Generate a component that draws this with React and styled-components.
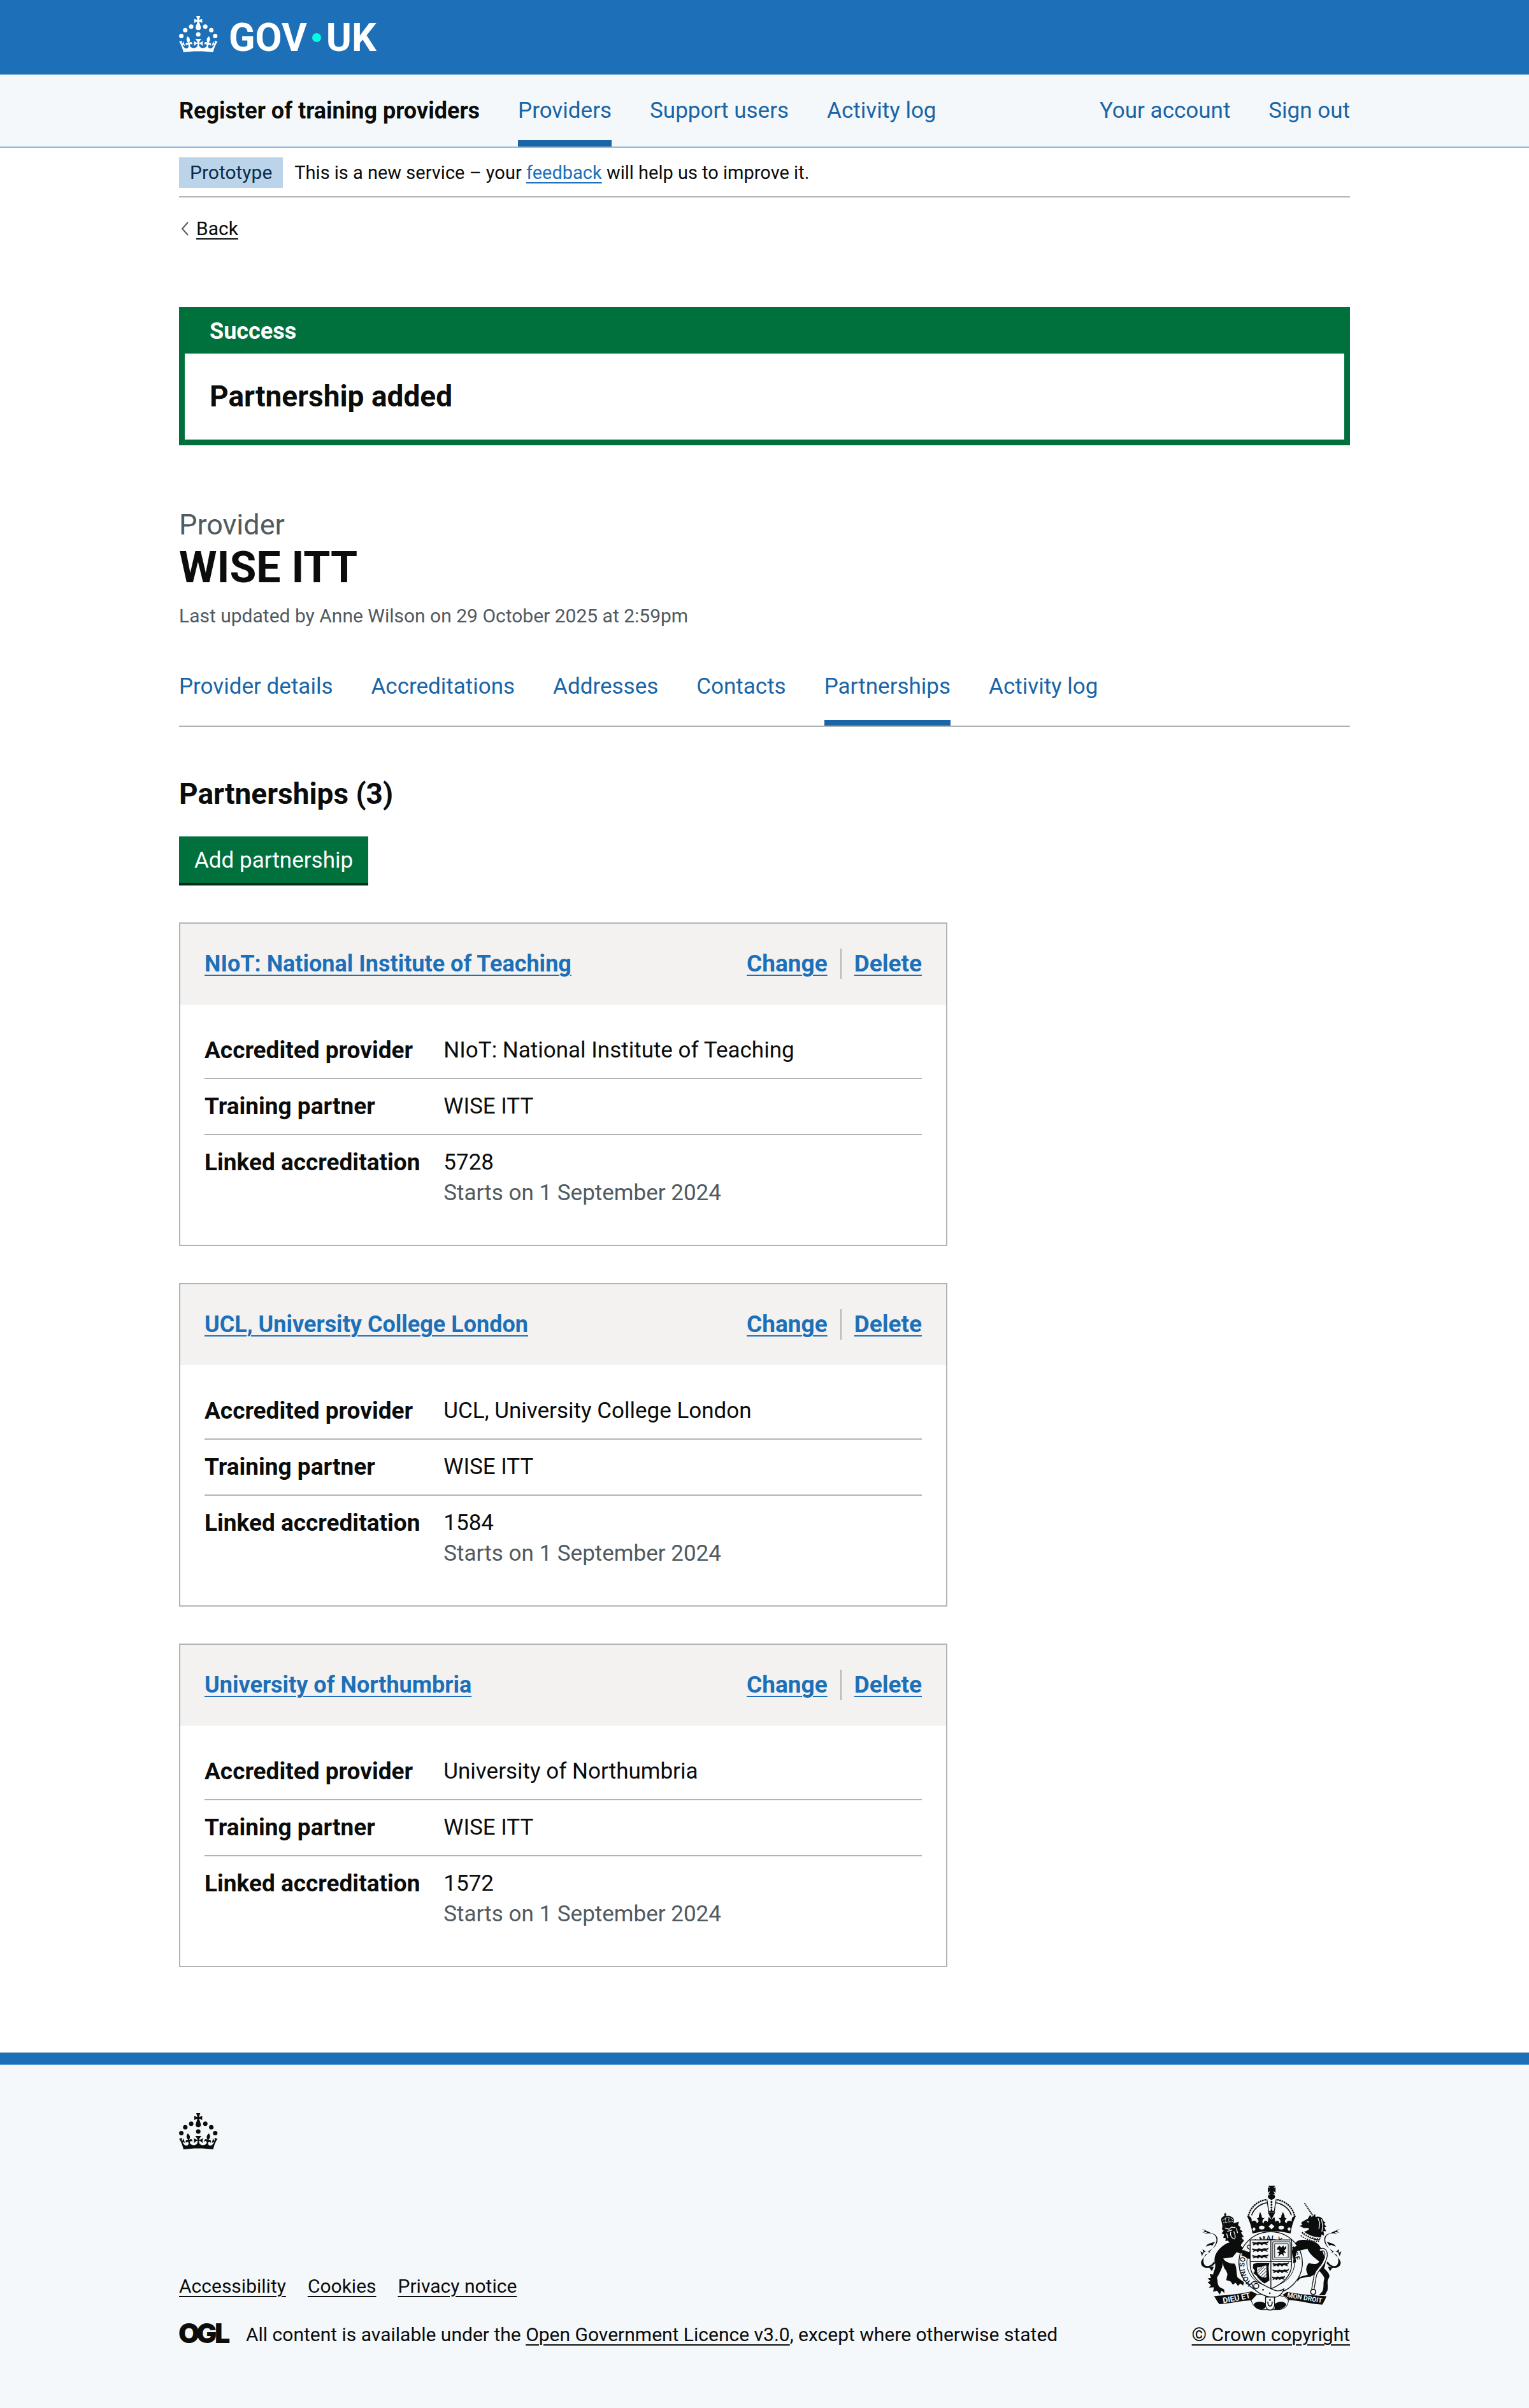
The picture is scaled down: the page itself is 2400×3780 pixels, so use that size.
import React from "react";
import styled, { createGlobalStyle, css } from "styled-components";

const color = {
  text: "#0b0c0c",
  secondary: "#505a5f",
  brand: "#1d70b8",
  link: "#1a65a6",
  brandTint: "#f4f8fb",
  tag: "#bbd4ea",
  tagText: "#0c2d4a",
  border: "#b1b4b6",
  navBorder: "#8eb8dc",
  green: "#00703c",
  greenDark: "#002d18",
  cardHeader: "#f3f2f1",
};

const GlobalStyle = createGlobalStyle`
  *, *::before, *::after { box-sizing: border-box; }
  body {
    margin: 0;
    background: ${color.brandTint};
    color: ${color.text};
    font-family: Roboto, "Liberation Sans", Arial, sans-serif;
    font-size: 35px;
    line-height: 48px;
  }
  h1, h2, p, ul, dl, dd { margin: 0; padding: 0; }
  ul { list-style: none; }
`;

const Container = styled.div`
  max-width: 1898px;
  margin: 0 auto;
  padding: 0 30px;
`;

const Page = styled.div`
  background: #fff;
`;

const small = css`
  font-size: 30px;
  line-height: 38px;
`;

const underline = css`
  text-decoration: underline;
  text-decoration-thickness: 2px;
  text-underline-offset: 5px;
`;

const TextLink = styled.a`
  ${underline}
  color: ${(p) => (p.$inverse ? color.text : color.brand)};
`;

/* Header */

const Header = styled.header`
  background: ${color.brand};
  padding: 25px 0 35px;
`;

const HomeLink = styled.a`
  display: inline-flex;
  align-items: center;
  color: #fff;
  text-decoration: none;
  height: 57px;
  vertical-align: top;
`;

const CrownSvg = styled.svg`
  display: block;
  width: 61px;
  height: 57px;
`;

const Wordmark = styled.span`
  display: inline-flex;
  align-items: center;
  gap: 8px;
  margin-left: 17px;
  padding-top: 10px;
  font-size: 61px;
  line-height: 60px;
  font-weight: 700;
`;

const Dot = styled.span`
  width: 14px;
  height: 14px;
  border-radius: 50%;
  background: #00ffe0;
`;

const ServiceBar = styled.div`
  background: ${color.brandTint};
  border-bottom: 2px solid ${color.navBorder};
`;

const ServiceRow = styled.div`
  display: flex;
  gap: 60px;
`;

const ServiceName = styled.a`
  padding-top: 33px;
  font-size: 36px;
  font-weight: 700;
  color: ${color.text};
  text-decoration: none;
`;

const NavList = styled.ul`
  display: flex;
  flex-grow: ${(p) => (p.$grow ? 1 : 0)};
  gap: 60px;
  border-bottom: ${(p) => (p.$ruled ? `2px solid ${color.border}` : "0")};
`;

const NavItem = styled.li`
  margin-left: ${(p) => (p.$pushed ? "auto" : "0")};
`;

const NavLink = styled.a`
  display: block;
  padding: 33px 0 22px;
  color: ${color.link};
  text-decoration: none;
  border-bottom: 10px solid ${(p) => (p.$active ? color.link : "transparent")};
`;

const TabLink = styled(NavLink)`
  padding: 0 0 28px;
  border-bottom-width: 9px;
`;

/* Page top */

const PhaseBanner = styled.div`
  ${small}
  display: flex;
  align-items: center;
  gap: 18px;
  padding: 15px 0 13px;
  border-bottom: 2px solid ${color.border};
`;

const PhaseTag = styled.strong`
  padding: 5px 17px;
  background: ${color.tag};
  color: ${color.tagText};
  font-weight: 400;
`;

const PhaseText = styled.span`
  font-size: 29px;
`;

const BackLink = styled.a`
  ${small}
  display: inline-flex;
  align-items: center;
  gap: 12px;
  margin-top: 30px;
  padding-left: 3px;
  color: ${color.text};
  text-decoration: none;
  vertical-align: top;
`;

const BackText = styled.span`
  ${underline}
`;

const Main = styled.main`
  padding: 104px 0 134px;
`;

const Banner = styled.section`
  border: 9px solid ${color.green};
`;

const BannerHeading = styled.h2`
  padding: 5px 39px 11px;
  background: ${color.green};
  color: #fff;
  font-size: 36px;
  line-height: 48px;
`;

const BannerText = styled.p`
  padding: 38px 39px 39px;
  font-size: 46px;
  line-height: 58px;
  font-weight: 700;
`;

const Title = styled.h1`
  margin-top: 96px;
  font-size: 68px;
  line-height: 76px;
`;

const Caption = styled.span`
  display: block;
  color: ${color.secondary};
  font-size: 45px;
  line-height: 58px;
  font-weight: 400;
`;

const Updated = styled.p`
  ${small}
  margin: 19px 0 68px;
  color: ${color.secondary};
`;

const SectionHeading = styled.h2`
  margin: 76px 0 38px;
  font-size: 46px;
  line-height: 58px;
`;

const Button = styled.button`
  display: block;
  margin-bottom: 62px;
  padding: 14px 24px 11px;
  border: 0;
  background: ${color.green};
  box-shadow: 0 4px 0 ${color.greenDark};
  color: #fff;
  font: inherit;
`;

/* Cards */

const CardList = styled.div`
  display: grid;
  gap: 58px;
  width: 66%;
  max-width: 1206px;
`;

const Card = styled.section`
  border: 2px solid ${color.border};
`;

const CardHeader = styled.div`
  display: flex;
  justify-content: space-between;
  padding: 39px 38px 40px;
  background: ${color.cardHeader};
  font-weight: 700;
`;

const CardTitle = styled.h2`
  font-size: 36px;
  line-height: 48px;
`;

const Actions = styled.ul`
  display: flex;
  font-size: 37px;
`;

const Action = styled.li`
  & + & {
    margin-left: 20px;
    padding-left: 20px;
    border-left: 2px solid ${color.border};
  }
`;

const Summary = styled.dl`
  padding: 29px 38px 57px;
`;

const SummaryRow = styled.div`
  display: grid;
  grid-template-columns: 1fr 2fr;
  padding: 19px 0;
  border-bottom: 2px solid ${color.border};

  &:last-child {
    padding-bottom: 0;
    border-bottom: 0;
  }
`;

const Term = styled.dt`
  font-size: 37px;
  font-weight: 700;
`;

const Hint = styled.span`
  display: block;
  color: ${color.secondary};
`;

/* Footer */

const Footer = styled.footer`
  ${small}
  padding: 76px 0 96px;
  background: ${color.brandTint};
  border-top: 19px solid ${color.brand};
`;

const FooterRow = styled.div`
  display: flex;
  align-items: flex-end;
  justify-content: space-between;
  margin-top: 57px;
`;

const FooterLinks = styled.ul`
  display: flex;
  gap: 34px;
  margin-bottom: 38px;
`;

const Licence = styled.div`
  display: flex;
  align-items: center;
  gap: 17px;
`;

const OglSvg = styled.svg`
  flex: none;
  width: 88px;
  height: 52px;
  margin: -10px 0 -4px;
`;

const Copyright = styled.a`
  ${underline}
  display: flex;
  flex-direction: column;
  align-items: center;
  gap: 19px;
  color: ${color.text};
`;

const ArmsSvg = styled.svg`
  display: block;
  width: 223px;
  height: 196px;
`;

function Crown() {
  return (
    <CrownSvg viewBox="0 0 64 60" fill="currentColor" aria-hidden="true">
      <circle cx="20" cy="17.6" r="3.7" />
      <circle cx="10.2" cy="23.5" r="3.7" />
      <circle cx="3.7" cy="33.2" r="3.7" />
      <circle cx="31.7" cy="30.6" r="3.7" />
      <circle cx="43.3" cy="17.6" r="3.7" />
      <circle cx="53.2" cy="23.5" r="3.7" />
      <circle cx="59.7" cy="33.2" r="3.7" />
      <path d="M33.1,9.8c.2-.1.3-.3.5-.5l4.6,2.4v-6.8l-4.6,1.5c-.1-.2-.3-.3-.5-.5l1.9-5.9h-6.7l1.9,5.9c-.2.1-.3.3-.5.5l-4.6-1.5v6.8l4.6-2.4c.1.2.3.3.5.5l-2.6,8c-.9,2.8,1.2,5.7,4.1,5.7h0c3,0,5.1-2.9,4.1-5.7l-2.6-8ZM37,37.9s-3.4,3.8-4.1,6.1c2.2,0,4.2-.5,6.4-2.8l-.7,8.5c-2-2.8-4.4-4.1-5.7-3.8.1,3.1.5,6.7,5.8,7.2,3.7.3,6.7-1.5,7-3.8.4-2.6-2-4.3-3.7-1.6-1.4-4.5,2.4-6.1,4.9-3.2-1.9-4.5-1.8-7.7,2.4-10.9,3,4,2.6,7.3-1.2,11.1,2.4-1.3,6.2,0,4,4.6-1.2-2.8-3.7-2.2-4.2.2-.3,1.7.7,3.7,3,4.2,1.9.3,4.7-.9,7-5.9-1.3,0-2.4.7-3.9,1.7l2.4-8c.6,2.3,1.4,3.7,2.2,4.5.6-1.6.5-2.8,0-5.3l5,1.8c-2.6,3.6-5.2,8.7-7.3,17.5-7.4-1.1-15.7-1.7-24.5-1.7h0c-8.8,0-17.1.6-24.5,1.7-2.1-8.9-4.7-13.9-7.3-17.5l5-1.8c-.5,2.5-.6,3.7,0,5.3.8-.8,1.6-2.3,2.2-4.5l2.4,8c-1.5-1-2.6-1.7-3.9-1.7,2.3,5,5.2,6.2,7,5.9,2.3-.4,3.3-2.4,3-4.2-.5-2.4-3-3.1-4.2-.2-2.2-4.6,1.6-6,4-4.6-3.7-3.7-4.2-7.1-1.2-11.1,4.2,3.2,4.3,6.4,2.4,10.9,2.5-2.8,6.3-1.3,4.9,3.2-1.8-2.7-4.1-1-3.7,1.6.3,2.3,3.3,4.1,7,3.8,5.4-.5,5.7-4.2,5.8-7.2-1.3-.2-3.7,1-5.7,3.8l-.7-8.5c2.2,2.3,4.2,2.7,6.4,2.8-.7-2.3-4.1-6.1-4.1-6.1h10.6,0Z" />
    </CrownSvg>
  );
}

function OglLogo() {
  return (
    <OglSvg viewBox="0 0 88 52" role="img" aria-label="Open Government Licence">
      <text y="42" x="-1 27 56" fontFamily="Inter, Roboto, sans-serif" fontWeight="900" fontSize="43" fill={color.text}>
        OGL
      </text>
    </OglSvg>
  );
}

/* A small passant lion, repeated in the quarters of the shield */
const lion =
  "M2 3l8 3 12 1 10-4 12 3 14-3 12 1 8-5-2 9-9 4 8 5-4 2-12-5-10 1 3 4-9 0-4-5-9 2 2 4-9-1-2-5-8 3-8 3-1-5 6-2-9-3z";

/* Foliate tail with three tufts */
const tail =
  "M262 458C236 492 196 484 195 456C194 430 270 390 268 346C266 322 244 312 212 320L226 310L202 314L214 306L198 296C216 302 232 312 244 316C270 322 278 340 270 362C262 384 244 392 228 404L240 406L216 418C204 434 204 456 212 466C224 480 246 468 256 450ZM262 356C240 366 226 362 218 380L240 372L248 376ZM236 402C216 398 204 406 200 426L192 402L206 410L202 392L216 402ZM212 470L236 478L256 474L246 496L236 482Z";

function RoyalArms() {
  return (
    <ArmsSvg viewBox="190 92 668 590" fill={color.text} stroke="none" aria-hidden="true">
      {/* Imperial crown */}
      <path d="M512 92h34l-10 13 11-6v26l-11-8 8 15h-30l8-15-11 8v-26l11 6z" />
      <ellipse cx="528" cy="144" rx="17" ry="13" />
      <path d="M420 230C432 188 468 162 506 158M636 230C624 188 588 162 550 158" fill="none" stroke={color.text} strokeWidth="8" strokeDasharray="1 10" strokeLinecap="round" />
      <path d="M434 232C444 200 474 178 506 173M622 232C612 200 582 178 550 173" fill="none" stroke={color.text} strokeWidth="5" />
      <path d="M506 156L515 214H541L550 156" fill="none" stroke={color.text} strokeWidth="4" />
      <path d="M528 156V212" fill="none" stroke={color.text} strokeWidth="9" strokeDasharray="1 12" strokeLinecap="round" />
      <path d="M412 234C434 236 436 250 434 262C446 252 462 262 456 268C468 268 472 258 458 246C466 248 470 240 468 234L474 216L482 234C480 242 486 248 496 244C482 256 482 266 492 270C488 258 504 252 510 264L514 240L528 252L510 218H546L528 252L542 240L546 264C552 252 568 258 564 270C574 266 574 256 560 244C570 248 576 242 574 234L582 216L590 234C588 240 592 248 600 246C586 258 590 268 602 268C596 262 612 252 624 262C622 250 624 236 644 234C630 260 622 290 618 318C560 304 496 304 438 318C434 290 426 260 412 234Z" />
      <g fill={color.brandTint}>
        <ellipse cx="482" cy="290" rx="13" ry="9" />
        <ellipse cx="574" cy="290" rx="13" ry="9" />
        <path d="M514 285l14-13 14 13-14 13zM437 298l8-10 8 9-8 11zM603 296l8-9 8 10-8 11z" />
      </g>
      {/* Supporter tails */}
      <path d={tail} />
      <path d={tail} transform="translate(1050 0) scale(-1 1)" />
      {/* Lion */}
      <path d="M292 262C286 246 296 238 306 236L304 226L310 220L314 228L311 236C328 232 354 238 350 262L346 276L296 282Z" />
      <path d="M298 256C308 240 334 240 344 254M300 268L346 260M310 244V266M326 242V262" fill="none" stroke={color.brandTint} strokeWidth="4" strokeDasharray="4 3" />
      <path d="M296 282L346 270L374 262L370 278L382 290L378 298L392 308L384 314L398 336L386 334L396 354L380 348L376 362L356 358L336 368L322 352L310 354L312 340L300 338L304 322L292 318L302 304L294 300Z" />
      <path d="M308 292L328 298L338 288L358 290M318 308C326 304 338 306 342 300M336 310C330 324 340 342 352 344C360 338 354 318 350 308M362 294L368 316M316 318L322 340" fill="none" stroke={color.brandTint} strokeWidth="4" />
      <path d="M318 364C340 356 372 352 396 346C404 352 380 366 384 378C402 388 416 402 436 408L430 418L440 424L430 432L434 442L420 436L410 438L396 420L364 406L344 430L300 436C306 452 336 462 352 460C366 470 360 510 368 526L398 548L394 564L380 554L370 566L358 550L346 560L334 544L314 538L320 510L312 490C300 482 300 460 296 448C304 472 280 508 270 528C276 548 270 560 284 572L304 582L306 600L292 588L284 606L270 588L252 594L256 572L232 574L242 562L226 548L240 542L226 530L242 528L236 510L252 512C256 490 264 486 262 462C250 430 270 390 318 364Z" />
      {/* Unicorn */}
      <path d="M684 174L722 232" fill="none" stroke={color.text} strokeWidth="6" strokeDasharray="6 3" />
      <path d="M668 268L674 262L700 248L710 230L718 240L734 226L736 240C754 234 770 244 774 260L784 268L776 272L788 288L778 288L786 308L774 306L776 328L764 322C764 336 758 348 752 352C726 350 700 336 672 318C684 306 704 304 706 296C698 288 690 296 676 290L660 282L674 278Z" />
      <path d="M748 246L756 270L752 296M764 250L770 282L766 310M696 262L706 264" fill="none" stroke={color.brandTint} strokeWidth="4" />
      <path d="M672 308C700 332 732 344 766 340M664 326C696 350 730 358 756 356" fill="none" stroke={color.brandTint} strokeWidth="9" />
      <path d="M672 312C700 334 732 346 762 342M666 328C694 348 726 356 752 356" fill="none" stroke={color.text} strokeWidth="5" strokeDasharray="6 5" />
      <path d="M654 352C684 342 732 350 752 372C764 388 770 398 776 424C786 444 784 468 776 482C794 500 806 512 800 526C786 546 798 564 792 588L780 610H752L768 592C778 570 770 552 778 530C772 508 752 500 752 486C730 516 712 524 704 522L664 530L648 546L652 530C672 516 684 520 700 512C688 494 690 474 704 458C722 462 742 468 754 450C726 430 706 412 698 390L656 400C646 406 644 424 638 436L646 458L634 462L624 432C628 400 636 386 656 378L690 372L630 384L626 372Z" />
      {/* Chain */}
      <path d="M760 396C786 384 792 420 780 442C770 474 740 490 734 520L724 578" fill="none" stroke={color.text} strokeWidth="15" strokeDasharray="16 5" strokeLinecap="round" />
      <path d="M760 396C786 384 792 420 780 442C770 474 740 490 734 520L724 578" fill="none" stroke={color.brandTint} strokeWidth="8" strokeDasharray="15 6" strokeLinecap="round" />
      <circle cx="725" cy="594" r="12" fill="none" stroke={color.text} strokeWidth="5" />
      {/* Garter */}
      <ellipse cx="524" cy="456" rx="150" ry="146" fill={color.brandTint} stroke={color.text} strokeWidth="4" />
      <ellipse cx="524" cy="456" rx="113" ry="110" fill="none" stroke={color.text} strokeWidth="3" />
      <path id="garter" d="M438 555A121 118 0 1 1 612 548" fill="none" />
      <text fontFamily="Roboto, sans-serif" fontSize="34" fontWeight="500">
        <textPath href="#garter">HONI SOIT QUI MAL Y PENSE</textPath>
      </text>
      {/* Supporters' forelegs over the garter */}
      <path d="M372 392L404 400L438 412L432 422L440 432L428 438L414 436L392 420Z" />
      <path d="M660 372L630 384C624 400 624 424 632 438L630 458L644 454L640 430L648 402L676 392Z" />
      {/* Shield */}
      <path d="M427 348H623V462C623 520 580 556 525 580C470 556 427 520 427 462Z" fill={color.brandTint} stroke={color.text} strokeWidth="4" />
      <path d="M525 348V580M427 451H623" fill="none" stroke={color.text} strokeWidth="4" />
      <g transform="translate(436 354)">
        <path d={lion} />
        <path d={lion} transform="translate(0 31)" />
        <path d={lion} transform="translate(0 62)" />
      </g>
      <g transform="translate(532 454)">
        <path d={lion} />
        <path d={lion} transform="translate(0 31)" />
        <path d={lion} transform="translate(-2 64) scale(.8 1)" />
      </g>
      <path d="M534 357H616V442H534ZM543 366H607V433H543Z" fill="none" stroke={color.text} strokeWidth="3" />
      <path d="M556 384L566 376L574 384L584 374L588 386L596 376L598 388L588 398L598 410L584 408L586 424L574 414L560 428L564 412L554 408L568 402L560 394L554 396Z" />
      <path d="M442 462L460 456H518L514 476L518 540L496 554C480 548 464 528 456 516L442 506L450 494L440 482Z" />
      <path d="M460 478C478 480 488 470 504 470V524C486 532 466 516 460 500Z" fill={color.brandTint} />
      <path d="M462 494L484 474M464 504L494 474M470 512L503 480M478 520L503 496M488 526L503 511" fill="none" stroke={color.text} strokeWidth="3" />
      {/* Ribbon */}
      <path d="M256 614C310 610 370 606 434 592L464 606C456 616 440 622 432 634C380 636 330 650 282 652C270 640 266 626 256 614Z" />
      <path d="M788 614C730 612 660 606 602 594L580 608C592 616 602 618 608 632C660 634 716 652 768 654C776 640 782 628 788 614Z" />
      <path d="M432 634C440 660 456 676 482 678H562C592 676 606 660 608 634L592 618L540 604L458 606Z" fill={color.brandTint} stroke={color.text} strokeWidth="3" />
      <path d="M444 654C448 638 488 636 504 652C502 668 494 676 480 677C462 676 450 668 444 654ZM598 654C592 638 558 636 544 652L542 677C570 679 590 670 598 654Z" />
      <path id="ribbon-left" d="M300 647Q370 637 440 619" fill="none" />
      <path id="ribbon-right" d="M601 618Q680 633 770 646" fill="none" />
      <g fill={color.brandTint} fontFamily="Roboto, sans-serif" fontWeight="700" fontSize="37">
        <text><textPath href="#ribbon-left">DIEU ET</textPath></text>
        <text fontSize="31"><textPath href="#ribbon-right">MON DROIT</textPath></text>
      </g>
      {/* Strap and buckle */}
      <path d="M436 560C428 544 452 540 476 554L536 584C556 592 572 590 586 580C580 604 560 620 536 620C494 616 448 596 436 560Z" fill={color.brandTint} stroke={color.text} strokeWidth="4" />
      <circle cx="456" cy="566" r="12" fill="none" stroke={color.text} strokeWidth="4" />
      <circle cx="488" cy="584" r="4" />
      <circle cx="520" cy="600" r="4" />
      <path d="M500 618H542V642C546 666 534 680 521 680C508 680 496 666 500 642Z" fill={color.brandTint} stroke={color.text} strokeWidth="4" />
      <path d="M511 640C508 668 534 668 531 640" fill="none" stroke={color.text} strokeWidth="5" />
      <circle cx="521" cy="632" r="4" />
    </ArmsSvg>
  );
}

const tabs = ["Provider details", "Accreditations", "Addresses", "Contacts", "Partnerships", "Activity log"];

const partnerships = [
  { name: "NIoT: National Institute of Teaching", code: "5728" },
  { name: "UCL, University College London", code: "1584" },
  { name: "University of Northumbria", code: "1572" },
];

function PartnershipCard({ name, code }) {
  return (
    <Card>
      <CardHeader>
        <CardTitle>
          <TextLink href="#">{name}</TextLink>
        </CardTitle>
        <Actions>
          <Action>
            <TextLink href="#">Change</TextLink>
          </Action>
          <Action>
            <TextLink href="#">Delete</TextLink>
          </Action>
        </Actions>
      </CardHeader>
      <Summary>
        <SummaryRow>
          <Term>Accredited provider</Term>
          <dd>{name}</dd>
        </SummaryRow>
        <SummaryRow>
          <Term>Training partner</Term>
          <dd>WISE ITT</dd>
        </SummaryRow>
        <SummaryRow>
          <Term>Linked accreditation</Term>
          <dd>
            {code}
            <Hint>Starts on 1 September 2024</Hint>
          </dd>
        </SummaryRow>
      </Summary>
    </Card>
  );
}

export default function App() {
  return (
    <>
      <GlobalStyle />
      <Page>
        <Header>
          <Container>
            <HomeLink href="#" aria-label="GOV.UK">
              <Crown />
              <Wordmark>
                <span>GOV</span>
                <Dot />
                <span>UK</span>
              </Wordmark>
            </HomeLink>
          </Container>
        </Header>
        <ServiceBar>
          <Container>
            <ServiceRow>
              <ServiceName href="#">Register of training providers</ServiceName>
              <NavList $grow>
                <NavItem><NavLink href="#" $active>Providers</NavLink></NavItem>
                <NavItem><NavLink href="#">Support users</NavLink></NavItem>
                <NavItem><NavLink href="#">Activity log</NavLink></NavItem>
                <NavItem $pushed><NavLink href="#">Your account</NavLink></NavItem>
                <NavItem><NavLink href="#">Sign out</NavLink></NavItem>
              </NavList>
            </ServiceRow>
          </Container>
        </ServiceBar>
        <Container>
          <PhaseBanner>
            <PhaseTag>Prototype</PhaseTag>
            <PhaseText>
              This is a new service – your <TextLink href="#">feedback</TextLink> will help us to improve it.
            </PhaseText>
          </PhaseBanner>
          <BackLink href="#">
            <svg width="12" height="22" viewBox="0 0 12 22" fill="none" stroke={color.secondary} strokeWidth="2" aria-hidden="true">
              <path d="M11 1L2 11L11 21" />
            </svg>
            <BackText>Back</BackText>
          </BackLink>
          <Main>
            <Banner role="alert">
              <BannerHeading>Success</BannerHeading>
              <BannerText>Partnership added</BannerText>
            </Banner>
            <Title>
              <Caption>Provider</Caption>
              WISE ITT
            </Title>
            <Updated>Last updated by Anne Wilson on 29 October 2025 at 2:59pm</Updated>
            <nav aria-label="Provider">
              <NavList $ruled>
                {tabs.map((tab) => (
                  <NavItem key={tab}>
                    <TabLink href="#" $active={tab === "Partnerships"}>{tab}</TabLink>
                  </NavItem>
                ))}
              </NavList>
            </nav>
            <SectionHeading>Partnerships (3)</SectionHeading>
            <Button type="button">Add partnership</Button>
            <CardList>
              {partnerships.map((item) => (
                <PartnershipCard key={item.code} {...item} />
              ))}
            </CardList>
          </Main>
        </Container>
      </Page>
      <Footer>
        <Container>
          <Crown />
          <FooterRow>
            <div>
              <FooterLinks>
                <li><TextLink href="#" $inverse>Accessibility</TextLink></li>
                <li><TextLink href="#" $inverse>Cookies</TextLink></li>
                <li><TextLink href="#" $inverse>Privacy notice</TextLink></li>
              </FooterLinks>
              <Licence>
                <OglLogo />
                <span>
                  All content is available under the{" "}
                  <TextLink href="#" $inverse>Open Government Licence v3.0</TextLink>, except where otherwise stated
                </span>
              </Licence>
            </div>
            <Copyright href="#">
              <RoyalArms />
              © Crown copyright
            </Copyright>
          </FooterRow>
        </Container>
      </Footer>
    </>
  );
}
